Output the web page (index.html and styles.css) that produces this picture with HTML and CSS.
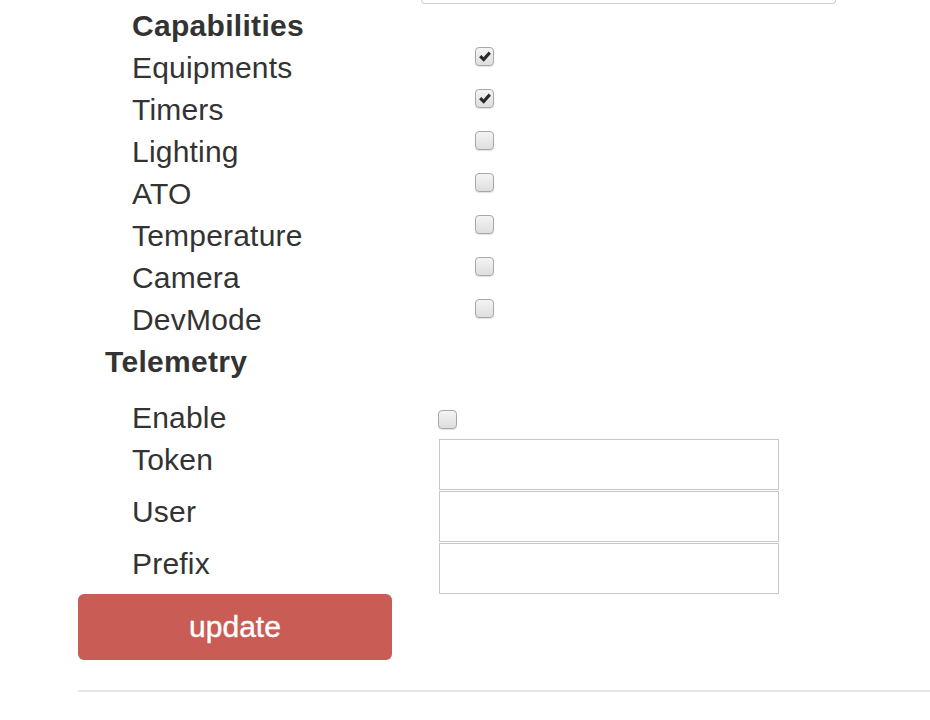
FILE: index.html
```html
<!DOCTYPE html>
<html>
<head>
<meta charset="utf-8">
<link rel="stylesheet" href="styles.css">
</head>
<body>
<div class="page">
  <div class="topfield"></div>
  <section class="caps">
    <div class="caps-title">Capabilities</div>
    <div class="row"><span class="label">Equipments</span><span class="cb"><svg viewBox="0 0 20 20"><path d="M2.6 10.4 L5.4 7.6 L8.2 10.4 L14.6 3.2 L17.4 6 L8.4 16 Z"/></svg></span></div>
    <div class="row"><span class="label">Timers</span><span class="cb"><svg viewBox="0 0 20 20"><path d="M2.6 10.4 L5.4 7.6 L8.2 10.4 L14.6 3.2 L17.4 6 L8.4 16 Z"/></svg></span></div>
    <div class="row"><span class="label">Lighting</span><span class="cb"></span></div>
    <div class="row"><span class="label">ATO</span><span class="cb"></span></div>
    <div class="row"><span class="label">Temperature</span><span class="cb"></span></div>
    <div class="row"><span class="label">Camera</span><span class="cb"></span></div>
    <div class="row"><span class="label">DevMode</span><span class="cb"></span></div>
  </section>
  <div class="section-title">Telemetry</div>
  <section class="tele">
    <div class="tele-row enable"><span class="label">Enable</span><span class="cb"></span></div>
    <div class="tele-row field"><span class="label">Token</span><input class="text" type="text"></div>
    <div class="tele-row field"><span class="label">User</span><input class="text" type="text"></div>
    <div class="tele-row field"><span class="label">Prefix</span><input class="text" type="text"></div>
  </section>
  <button class="update">update</button>
  <hr class="divider">
</div>
</body>
</html>
```
FILE: styles.css
```css
html, body {
  margin: 0;
  padding: 0;
  background: #fff;
}
body {
  font-family: "Liberation Sans", Arial, sans-serif;
  color: #333;
  font-size: 30px;
}
.page {
  padding-left: 78px;
  display: flex;
  flex-direction: column;
  align-items: flex-start;
}
.topfield {
  margin-left: 343px;
  width: 413px;
  height: 3px;
  border: 1px solid #cfcfcf;
  border-top: none;
  border-radius: 0 0 7px 7px;
}
.caps {
  margin-top: 1px;
  padding-left: 54px;
  display: flex;
  flex-direction: column;
}
.caps-title, .section-title {
  font-weight: bold;
  line-height: 42px;
  height: 42px;
  letter-spacing: 0.3px;
}
.label {
  letter-spacing: 0.2px;
}
.row {
  display: grid;
  grid-template-columns: 343px 20px;
  height: 42px;
  line-height: 42px;
}
.cb {
  box-sizing: border-box;
  width: 19px;
  height: 19px;
  border: 1px solid #a8a8a8;
  border-radius: 4px;
  background: linear-gradient(#f4f4f4, #dedede);
  box-shadow: 0 1px 1px rgba(0,0,0,0.12);
  display: flex;
  align-items: center;
  justify-content: center;
}
.cb svg {
  width: 16px;
  height: 16px;
  fill: #2a2a2a;
}
.section-title {
  padding-left: 27px;
}
.tele {
  margin-top: 14px;
  padding-left: 54px;
  display: flex;
  flex-direction: column;
}
.tele-row {
  display: grid;
  grid-template-columns: 306px 340px;
  align-items: start;
}
.tele-row .label {
  line-height: 42px;
}
.enable {
  height: 42px;
}
.enable .cb {
  margin-top: 13px;
}
.field {
  height: 52px;
}
.text {
  box-sizing: border-box;
  margin: 0 0 0 1px;
  width: 340px;
  height: 51px;
  border: 1px solid #c8c8c8;
  border-radius: 0;
  padding: 0;
  background: #fff;
  font: inherit;
}
.update {
  margin-top: -1px;
  width: 314px;
  height: 66px;
  border: none;
  border-radius: 6px;
  background: #c95c55;
  color: #fff;
  font-family: "Liberation Sans", Arial, sans-serif;
  font-size: 30px;
  -webkit-text-stroke: 0.4px #fff;
  padding: 0;
  cursor: pointer;
}
.divider {
  margin: 30px 0 0 0;
  width: 852px;
  border: none;
  border-top: 2px solid #e6e6e6;
  height: 0;
}
```
